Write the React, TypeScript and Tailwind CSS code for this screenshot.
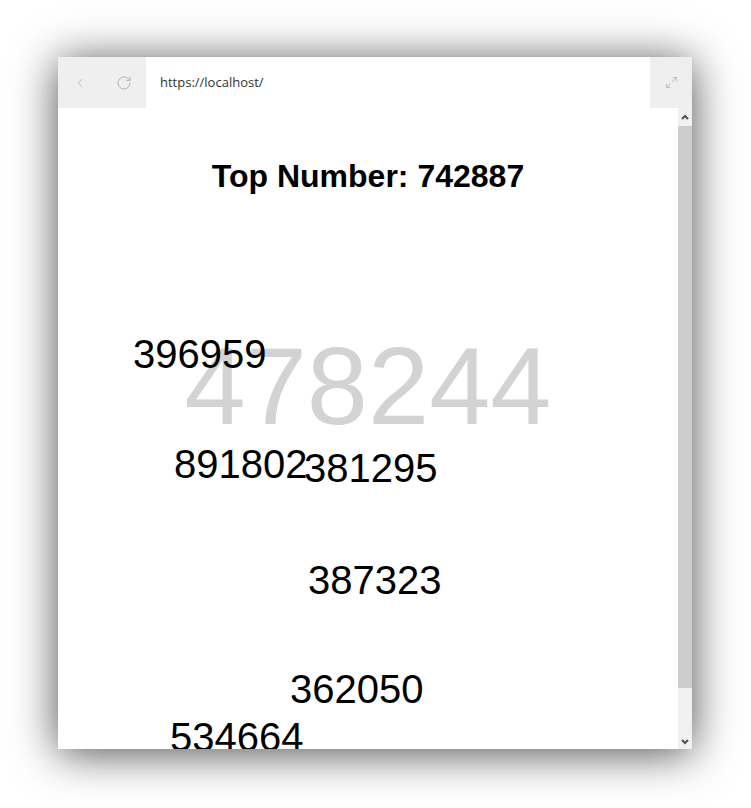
import { ChevronLeft, RotateCw, Maximize2 } from 'lucide-react';

const numbers = [
  { value: '396959', className: 'left-[75px] top-[226px]' },
  { value: '891802', className: 'left-[116px] top-[336px]' },
  { value: '381295', className: 'left-[246px] top-[340px]' },
  { value: '387323', className: 'left-[250px] top-[452px]' },
  { value: '362050', className: 'left-[232px] top-[561px]' },
  { value: '534664', className: 'left-[112px] top-[609px]' },
];

const App = () => {
  return (
    <div className="w-[751px] h-[808px] bg-white pt-[57px] pl-[58px]">
      <div className="w-[634px] h-[692px] bg-white flex flex-col shadow-[0_4px_42px_rgba(0,0,0,0.7)]">
        {/* toolbar */}
        <div className="h-[51px] flex items-stretch">
          <div className="w-[88px] bg-[#efefef] flex items-center">
            <ChevronLeft className="ml-[15px]" size={14} strokeWidth={1.3} color="#a3a9b8" />
            <RotateCw className="ml-[29px]" size={16} strokeWidth={1.3} color="#a3a9b8" />
          </div>
          <div className="flex-1 flex items-center pl-[14px] text-[13px] text-[#333] font-['Open_Sans',sans-serif]">
            https://localhost/
          </div>
          <div className="w-[42px] bg-[#efefef] flex items-center justify-center">
            <Maximize2 size={13} strokeWidth={1.3} color="#a3a9b8" className="-scale-x-100 rotate-90" />
          </div>
        </div>

        {/* page */}
        <div className="flex-1 flex min-h-0">
          <div className="relative flex-1 overflow-hidden font-['Liberation_Sans',Arial,sans-serif] text-black">
            <h1 className="pt-[52px] text-center text-[32px] font-bold leading-none">Top Number: 742887</h1>
            <div className="absolute left-0 right-0 top-[223px] text-center text-[110px] leading-none text-[#d3d3d3]">
              478244
            </div>
            {numbers.map((n) => (
              <div key={n.value} className={`absolute text-[40px] leading-none ${n.className}`}>
                {n.value}
              </div>
            ))}
          </div>

          {/* scrollbar */}
          <div className="w-[14px] bg-[#f0f0f0] flex flex-col">
            <div className="h-[18px] flex items-center justify-center">
              <svg width="8" height="6" viewBox="0 0 8 6">
                <polyline points="1,5 4,2 7,5" fill="none" stroke="#505050" strokeWidth="2" />
              </svg>
            </div>
            <div className="h-[562px] bg-[#cdcdcd]" />
            <div className="flex-1 flex items-end justify-center pb-[4px]">
              <svg width="8" height="6" viewBox="0 0 8 6">
                <polyline points="1,1 4,4 7,1" fill="none" stroke="#505050" strokeWidth="2" />
              </svg>
            </div>
          </div>
        </div>
      </div>
    </div>
  );
};

export default App;
